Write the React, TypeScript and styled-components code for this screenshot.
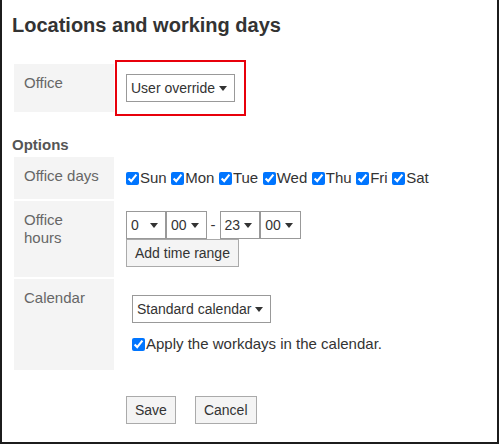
import React from "react";
import styled, { createGlobalStyle } from "styled-components";

const GlobalStyle = createGlobalStyle`
  html, body { margin: 0; padding: 0; background: #fff; }
  body { font-family: "Liberation Sans", Arial, sans-serif; color: #333; }
  * { box-sizing: border-box; }
`;

const Frame = styled.div`
  width: 499px;
  height: 444px;
  border: 2px solid #1c1c1c;
  border-top: none;
  padding: 13px 10px 0;
`;

const Title = styled.h1`
  margin: 0;
  font-size: 20px;
  line-height: 24px;
  font-weight: bold;
  color: #333;
`;

const Table = styled.div<{ $top: number }>`
  display: flex;
  flex-direction: column;
  gap: 2px;
  margin: ${(p) => p.$top}px 0 0 2px;
`;

const Row = styled.div`
  display: grid;
  grid-template-columns: 100px 1fr;
`;

const Label = styled.div`
  background: #f4f4f4;
  color: #666;
  font-size: 15px;
  line-height: 18px;
  padding: 10px;
`;

const Cell = styled.div`
  padding: 10px 12px;
  font-size: 15px;
  line-height: 18px;
  display: flex;
  flex-direction: column;
  align-items: flex-start;
`;

const Section = styled.h2`
  margin: 24px 0 3px;
  font-size: 15px;
  line-height: 18px;
  font-weight: bold;
  color: #555;
`;

const Highlight = styled.div`
  position: relative;
  display: inline-flex;
  &::before {
    content: "";
    position: absolute;
    top: -14px;
    left: -11px;
    right: -11px;
    bottom: -14px;
    border: 2px solid #e8000b;
    pointer-events: none;
  }
`;

const SelectBox = styled.span<{ $min?: number }>`
  position: relative;
  display: inline-flex;
  align-items: center;
  height: 28px;
  min-width: ${(p) => p.$min ?? 0}px;
  padding: 0 19px 0 4px;
  border: 1px solid #999;
  background: #fff;
  font-size: 14px;
  color: #333;
  white-space: nowrap;
  &::after {
    content: "";
    position: absolute;
    right: 7px;
    top: 50%;
    margin-top: -2px;
    border-left: 4px solid transparent;
    border-right: 4px solid transparent;
    border-top: 5px solid #333;
  }
`;

const Days = styled.div`
  display: flex;
  align-items: center;
  gap: 4.5px;
  height: 22px;
  color: #333;
`;

const CheckLabel = styled.label`
  display: inline-flex;
  align-items: center;
  white-space: nowrap;
`;

const Check = styled.input.attrs({ type: "checkbox" })`
  width: 13px;
  height: 13px;
  margin: 0 1px 0 0;
`;

const TimeLine = styled.div`
  display: flex;
  align-items: center;
`;

const Sep = styled.span`
  margin: 0 4px;
  color: #333;
`;

const Button = styled.button`
  height: 28px;
  padding: 0 8px;
  border: 1px solid #aaa;
  border-radius: 0;
  background: #f4f4f4;
  font-family: "Liberation Sans", Arial, sans-serif;
  font-size: 14px;
  color: #333;
`;

const CalendarBox = styled.div`
  padding: 6px;
  display: flex;
  flex-direction: column;
  align-items: flex-start;
`;

const ApplyLine = styled.div`
  display: flex;
  align-items: center;
  height: 20px;
  margin-top: 11px;
  color: #333;
`;

const Actions = styled.div`
  display: flex;
  gap: 19px;
  margin: 26px 0 0 114px;
`;

const days = ["Sun", "Mon", "Tue", "Wed", "Thu", "Fri", "Sat"];

export default function App() {
  return (
    <>
      <GlobalStyle />
      <Frame>
        <Title>Locations and working days</Title>
        <Table $top={27}>
          <Row>
            <Label>Office</Label>
            <Cell>
              <Highlight>
                <SelectBox>User override</SelectBox>
              </Highlight>
            </Cell>
          </Row>
        </Table>
        <Section>Options</Section>
        <Table $top={0}>
          <Row>
            <Label>Office days</Label>
            <Cell>
              <Days>
                {days.map((d) => (
                  <CheckLabel key={d}>
                    <Check defaultChecked />
                    {d}
                  </CheckLabel>
                ))}
              </Days>
            </Cell>
          </Row>
          <Row>
            <Label>
              Office
              <br />
              hours
            </Label>
            <Cell>
              <TimeLine>
                <SelectBox $min={40}>0</SelectBox>
                <SelectBox $min={40}>00</SelectBox>
                <Sep>-</Sep>
                <SelectBox $min={40}>23</SelectBox>
                <SelectBox $min={40}>00</SelectBox>
              </TimeLine>
              <Button>Add time range</Button>
            </Cell>
          </Row>
          <Row>
            <Label>Calendar</Label>
            <Cell>
              <CalendarBox>
                <SelectBox>Standard calendar</SelectBox>
                <ApplyLine>
                  <CheckLabel>
                    <Check defaultChecked />
                    Apply the workdays in the calendar.
                  </CheckLabel>
                </ApplyLine>
              </CalendarBox>
            </Cell>
          </Row>
        </Table>
        <Actions>
          <Button>Save</Button>
          <Button>Cancel</Button>
        </Actions>
      </Frame>
    </>
  );
}
